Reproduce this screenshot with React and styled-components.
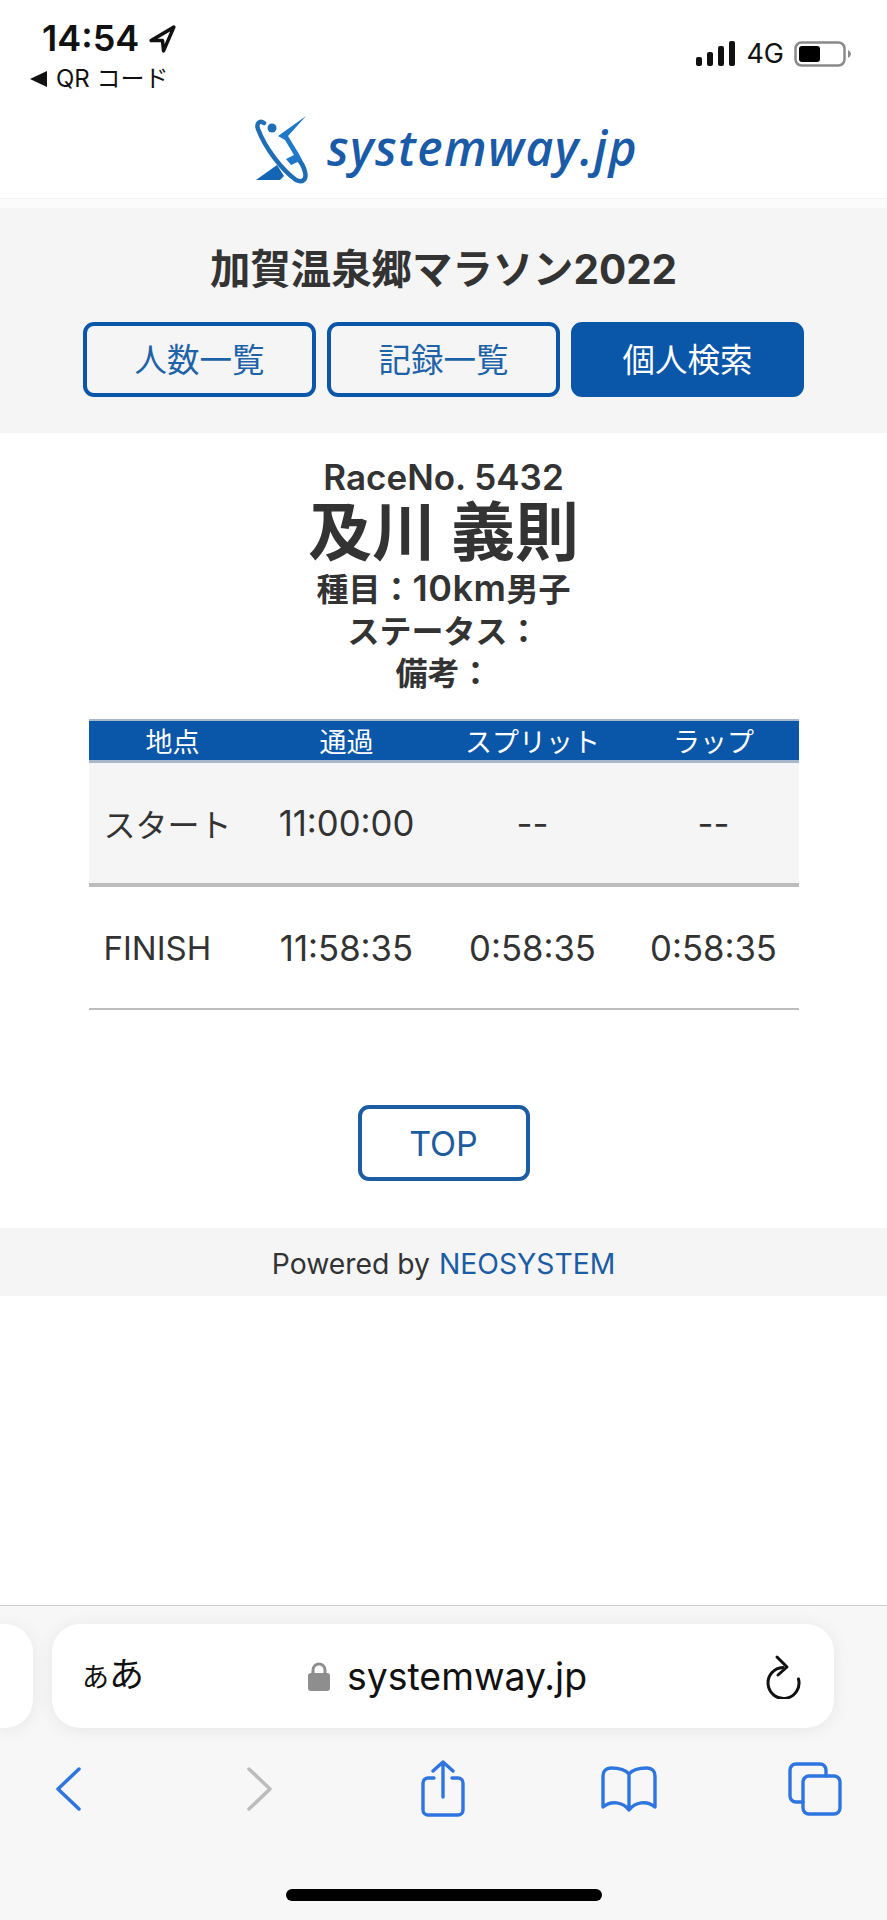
import React from "react";
import styled, { createGlobalStyle } from "styled-components";

const FONT = `Inter, "Noto Sans CJK JP", sans-serif`;
const BLUE = "#0a56a8";

const GlobalStyle = createGlobalStyle`
  html, body {
    margin: 0;
    padding: 0;
    background: #fff;
  }
  body {
    font-family: ${FONT};
    color: #333;
  }
`;

const Page = styled.div`
  width: 887px;
  height: 1920px;
  display: flex;
  flex-direction: column;
  overflow: hidden;
  background: #fff;
`;

const TopArea = styled.header`
  height: 198px;
  display: flex;
  flex-direction: column;
`;

const StatusBar = styled.div`
  height: 100px;
  display: flex;
  justify-content: space-between;
  align-items: flex-start;
  padding: 21px 34px 0 30px;
  box-sizing: border-box;
`;

const StatusLeft = styled.div`
  display: flex;
  flex-direction: column;
  gap: 11px;
`;

const TimeRow = styled.div`
  display: flex;
  align-items: center;
  gap: 8px;
  padding-left: 12px;
  font-size: 36px;
  line-height: 34px;
  font-weight: 600;
  color: #111;
`;

const BackRow = styled.div`
  display: flex;
  align-items: center;
  gap: 9px;
  font-size: 24px;
  line-height: 26px;
  color: #111;
`;

const StatusRight = styled.div`
  display: flex;
  align-items: center;
  gap: 10px;
  margin-top: 20px;
  margin-right: 1px;
  font-size: 27px;
  line-height: 26px;
  color: #111;
`;

const LogoRow = styled.div`
  height: 82px;
  display: flex;
  justify-content: center;
  align-items: flex-start;
  gap: 8px;
  margin-top: 12px;
`;

const LogoText = styled.span`
  font-family: "Open Sans", sans-serif;
  font-style: italic;
  font-weight: 600;
  font-size: 48px;
  line-height: 64px;
  letter-spacing: 1.4px;
  color: #1a5ba8;
  margin-top: 4px;
`;

const Strip = styled.div`
  height: 10px;
  background: #fbfbfb;
  border-top: 1px solid #f3f3f3;
  box-sizing: border-box;
`;

const RaceHeader = styled.section`
  height: 225px;
  background: #f5f5f5;
  display: flex;
  flex-direction: column;
  align-items: center;
  box-sizing: border-box;
  padding-top: 36px;
`;

const RaceTitle = styled.h1`
  margin: 0;
  font-size: 40.4px;
  line-height: 52px;
  font-weight: 700;
  color: #333;
`;

const TabRow = styled.nav`
  display: flex;
  gap: 11px;
  margin-top: 26px;
`;

const TabButton = styled.a`
  width: 233px;
  height: 75px;
  box-sizing: border-box;
  padding-bottom: 5px;
  display: flex;
  justify-content: center;
  align-items: center;
  border: 4px solid ${BLUE};
  border-radius: 11px;
  font-size: 32.5px;
  color: ${(props) => (props.$active ? "#fff" : "#1e62a8")};
  background: ${(props) => (props.$active ? BLUE : "transparent")};
`;

const Runner = styled.section`
  display: flex;
  flex-direction: column;
  align-items: center;
  padding-top: 25px;
  font-weight: 700;
  color: #333;
`;

const RaceNo = styled.div`
  font-size: 35px;
  line-height: 38px;
  font-weight: 600;
`;

const RunnerName = styled.div`
  font-size: 64px;
  line-height: 71px;
`;

const RunnerInfo = styled.div`
  font-size: 32px;
  line-height: 42px;
  font-weight: 600;
`;

const InfoLatin = styled.span`
  font-size: 36px;
  letter-spacing: 0.5px;
`;

const Table = styled.div`
  width: 710px;
  margin: 24px auto 0;
`;

const Row = styled.div`
  display: grid;
  grid-template-columns: 168px 180px 192px 170px;
  align-items: center;
`;

const HeadRow = styled(Row)`
  height: 44px;
  box-sizing: border-box;
  padding-bottom: 2px;
  background: ${BLUE};
  border-top: 2px solid #a8b8cc;
  border-bottom: 3px solid #a8b8cc;
  color: #fff;
  font-size: 27px;
`;

const BodyRow = styled(Row)`
  height: ${(props) => props.$height}px;
  box-sizing: border-box;
  background: ${(props) => (props.$shaded ? "#f5f5f5" : "#fff")};
  border-bottom: ${(props) => props.$rule}px solid #bdbdbd;
  font-size: 32px;
  color: #333;
`;

const Cell = styled.div`
  text-align: ${(props) => (props.$left ? "left" : "center")};
  padding-left: ${(props) => (props.$left ? "15px" : "0")};
  font-size: ${(props) => (props.$time ? "34.7px" : "inherit")};
`;

const PointLabel = styled.span`
  font-size: ${(props) => (props.$latin ? "33px" : "inherit")};
`;

const TopLink = styled.a`
  width: 172px;
  height: 76px;
  box-sizing: border-box;
  margin: 95px auto 0;
  display: flex;
  justify-content: center;
  align-items: center;
  border: 4.5px solid #1b5ca3;
  border-radius: 11px;
  font-size: 34px;
  color: #1e5c9e;
`;

const Footer = styled.footer`
  height: 68px;
  margin-top: 47px;
  padding-top: 3px;
  box-sizing: border-box;
  background: #f5f5f5;
  display: flex;
  justify-content: center;
  align-items: center;
  gap: 9px;
  font-size: 28.3px;
  color: #333;
`;

const FooterLink = styled.a`
  color: #1b5ca3;
`;

const Toolbar = styled.div`
  margin-top: auto;
  height: 315px;
  box-sizing: border-box;
  border-top: 1px solid #cfcfcf;
  background: #f7f7f7;
  display: flex;
  flex-direction: column;
`;

const AddressRow = styled.div`
  display: flex;
  gap: 19px;
  margin-top: 18px;
`;

const SideCard = styled.div`
  width: 33px;
  height: 104px;
  background: #fff;
  border-radius: 0 28px 28px 0;
  box-shadow: 0 2px 18px rgba(0, 0, 0, 0.07);
`;

const AddressBar = styled.div`
  width: 782px;
  height: 104px;
  box-sizing: border-box;
  padding: 0 32px 0 30px;
  background: #fff;
  border-radius: 28px;
  box-shadow: 0 2px 18px rgba(0, 0, 0, 0.07);
  display: grid;
  grid-template-columns: 226px auto 1fr;
  align-items: center;
`;

const TextSize = styled.span`
  font-size: 35px;
  line-height: 40px;
  color: #111;

  small {
    font-size: 27px;
  }
`;

const UrlGroup = styled.div`
  display: flex;
  align-items: center;
  gap: 17px;
  font-size: 37.4px;
  color: #111;
`;

const ReloadWrap = styled.div`
  justify-self: end;
  display: flex;
`;

const NavRow = styled.div`
  height: 54px;
  margin-top: 32px;
  display: grid;
  grid-template-columns: 136px 248px 118px 254px 118px;
  justify-items: center;
  align-items: center;
`;

const HomeBar = styled.div`
  width: 316px;
  height: 12px;
  margin: auto auto 19px;
  border-radius: 6px;
  background: #000;
`;

const Triangle = styled.span`
  width: 0;
  height: 0;
  border-style: solid;
  border-width: 8px 17px 8px 0;
  border-color: transparent #111 transparent transparent;
`;

const LogoMark = () => (
  <svg width="70" height="75" viewBox="0 0 70 75">
    <path
      d="M15 11C11 8 7 11 9 17C16 36 33 58 47 68C53 71 58 68 56 60C55 55 52 50 48 45"
      fill="none"
      stroke="#1f6db5"
      strokeWidth="4.5"
      strokeLinecap="round"
    />
    <circle cx="23" cy="16" r="4.5" fill="#1f6db5" />
    <path d="M57 4L29 24L36 28L45 43L37 47L42 53L53 48L50 42L39 24Z" fill="#1f78c8" />
    <path d="M7 68L28 53L35 64L31 68Z" fill="#1565b5" />
  </svg>
);

const LocationArrow = () => (
  <svg width="31" height="31" viewBox="0 0 30 30">
    <path
      d="M26 4L4 17H15L16 27Z"
      fill="none"
      stroke="#111"
      strokeWidth="3.4"
      strokeLinejoin="round"
    />
  </svg>
);

const SignalIcon = () => (
  <svg width="41" height="26" viewBox="0 0 41 26">
    <rect x="1" y="16" width="6" height="9" rx="2" fill="#111" />
    <rect x="12" y="11" width="6" height="14" rx="2" fill="#111" />
    <rect x="23" y="5" width="6" height="20" rx="2" fill="#111" />
    <rect x="34" y="0" width="6" height="25" rx="2" fill="#111" />
  </svg>
);

const BatteryIcon = () => (
  <svg width="58" height="26" viewBox="0 0 58 26">
    <rect x="1.5" y="1.5" width="49" height="23" rx="6" fill="none" stroke="#8a8a8a" strokeWidth="2.5" />
    <rect x="5" y="5" width="21" height="16" rx="3" fill="#000" />
    <path d="M54 9C56 10 57 12 57 13C57 14 56 16 54 17Z" fill="#8a8a8a" />
  </svg>
);

const LockIcon = () => (
  <svg width="22" height="30" viewBox="0 0 22 30">
    <path d="M5 14V9A6 6 0 0 1 17 9V14" fill="none" stroke="#8e8e8e" strokeWidth="3" />
    <rect x="0" y="12" width="22" height="18" rx="3" fill="#8e8e8e" />
  </svg>
);

const ReloadIcon = () => (
  <svg width="38" height="46" viewBox="0 0 38 46">
    <path
      d="M19 14.5A15.5 15.5 0 1 0 34.5 26"
      fill="none"
      stroke="#111"
      strokeWidth="3"
      strokeLinecap="round"
    />
    <path
      d="M13 4L23 14L14 22"
      fill="none"
      stroke="#111"
      strokeWidth="3"
      strokeLinecap="round"
      strokeLinejoin="round"
    />
  </svg>
);

const Chevron = ({ flip, color }) => (
  <svg width="26" height="44" viewBox="0 0 26 44">
    <path
      d={flip ? "M2 2L23 22L2 42" : "M24 2L3 22L24 42"}
      fill="none"
      stroke={color}
      strokeWidth="3.5"
      strokeLinecap="round"
      strokeLinejoin="round"
    />
  </svg>
);

const ShareIcon = () => (
  <svg width="44" height="57" viewBox="0 0 44 57" fill="none" stroke="#2f75e0" strokeWidth="3.4" strokeLinecap="round" strokeLinejoin="round">
    <path d="M13 18H7A5 5 0 0 0 2 23V50A5 5 0 0 0 7 55H37A5 5 0 0 0 42 50V23A5 5 0 0 0 37 18H31" />
    <path d="M22 37V2M12 11L22 2L32 11" />
  </svg>
);

const BookIcon = () => (
  <svg width="56" height="46" viewBox="0 0 56 46" fill="none" stroke="#2f75e0" strokeWidth="3.4" strokeLinecap="round" strokeLinejoin="round">
    <path d="M28 8C24 3 16 2 10 2C5 2 2 5 2 10V41C10 34 22 36 28 44C34 36 46 34 54 41V10C54 5 51 2 46 2C40 2 32 3 28 8ZM28 8V44" />
  </svg>
);

const TabsIcon = () => (
  <svg width="54" height="54" viewBox="0 0 54 54" fill="none" stroke="#2f75e0" strokeWidth="3.4" strokeLinecap="round" strokeLinejoin="round">
    <rect x="15" y="14" width="37" height="38" rx="6" />
    <path d="M15 40H8A6 6 0 0 1 2 34V8A6 6 0 0 1 8 2H32A6 6 0 0 1 38 8V14" />
  </svg>
);

const splits = [
  { point: "スタート", pass: "11:00:00", split: "--", lap: "--", shaded: true, height: 124, rule: 4 },
  { point: "FINISH", latin: true, pass: "11:58:35", split: "0:58:35", lap: "0:58:35", height: 123, rule: 2 },
];

const App = () => (
  <Page>
    <GlobalStyle />
    <TopArea>
      <StatusBar>
        <StatusLeft>
          <TimeRow>
            14:54
            <LocationArrow />
          </TimeRow>
          <BackRow>
            <Triangle />
            QR コード
          </BackRow>
        </StatusLeft>
        <StatusRight>
          <SignalIcon />
          4G
          <BatteryIcon />
        </StatusRight>
      </StatusBar>
      <LogoRow>
        <LogoMark />
        <LogoText>systemway.jp</LogoText>
      </LogoRow>
    </TopArea>
    <Strip />
    <RaceHeader>
      <RaceTitle>加賀温泉郷マラソン2022</RaceTitle>
      <TabRow>
        <TabButton>人数一覧</TabButton>
        <TabButton>記録一覧</TabButton>
        <TabButton $active>個人検索</TabButton>
      </TabRow>
    </RaceHeader>
    <Runner>
      <RaceNo>RaceNo. 5432</RaceNo>
      <RunnerName>及川 義則</RunnerName>
      <RunnerInfo>
        種目：<InfoLatin>10km</InfoLatin>男子
      </RunnerInfo>
      <RunnerInfo>ステータス：</RunnerInfo>
      <RunnerInfo>備考：</RunnerInfo>
    </Runner>
    <Table>
      <HeadRow>
        <Cell>地点</Cell>
        <Cell>通過</Cell>
        <Cell>スプリット</Cell>
        <Cell>ラップ</Cell>
      </HeadRow>
      {splits.map((s) => (
        <BodyRow key={s.point} $shaded={s.shaded} $height={s.height} $rule={s.rule}>
          <Cell $left>
            <PointLabel $latin={s.latin}>{s.point}</PointLabel>
          </Cell>
          <Cell $time>{s.pass}</Cell>
          <Cell $time>{s.split}</Cell>
          <Cell $time>{s.lap}</Cell>
        </BodyRow>
      ))}
    </Table>
    <TopLink>TOP</TopLink>
    <Footer>
      Powered by <FooterLink>NEOSYSTEM</FooterLink>
    </Footer>
    <Toolbar>
      <AddressRow>
        <SideCard />
        <AddressBar>
          <TextSize>
            <small>あ</small>あ
          </TextSize>
          <UrlGroup>
            <LockIcon />
            systemway.jp
          </UrlGroup>
          <ReloadWrap>
            <ReloadIcon />
          </ReloadWrap>
        </AddressBar>
      </AddressRow>
      <NavRow>
        <Chevron color="#2f75e0" />
        <Chevron flip color="#bcbcbc" />
        <ShareIcon />
        <BookIcon />
        <TabsIcon />
      </NavRow>
      <HomeBar />
    </Toolbar>
  </Page>
);

export default App;
